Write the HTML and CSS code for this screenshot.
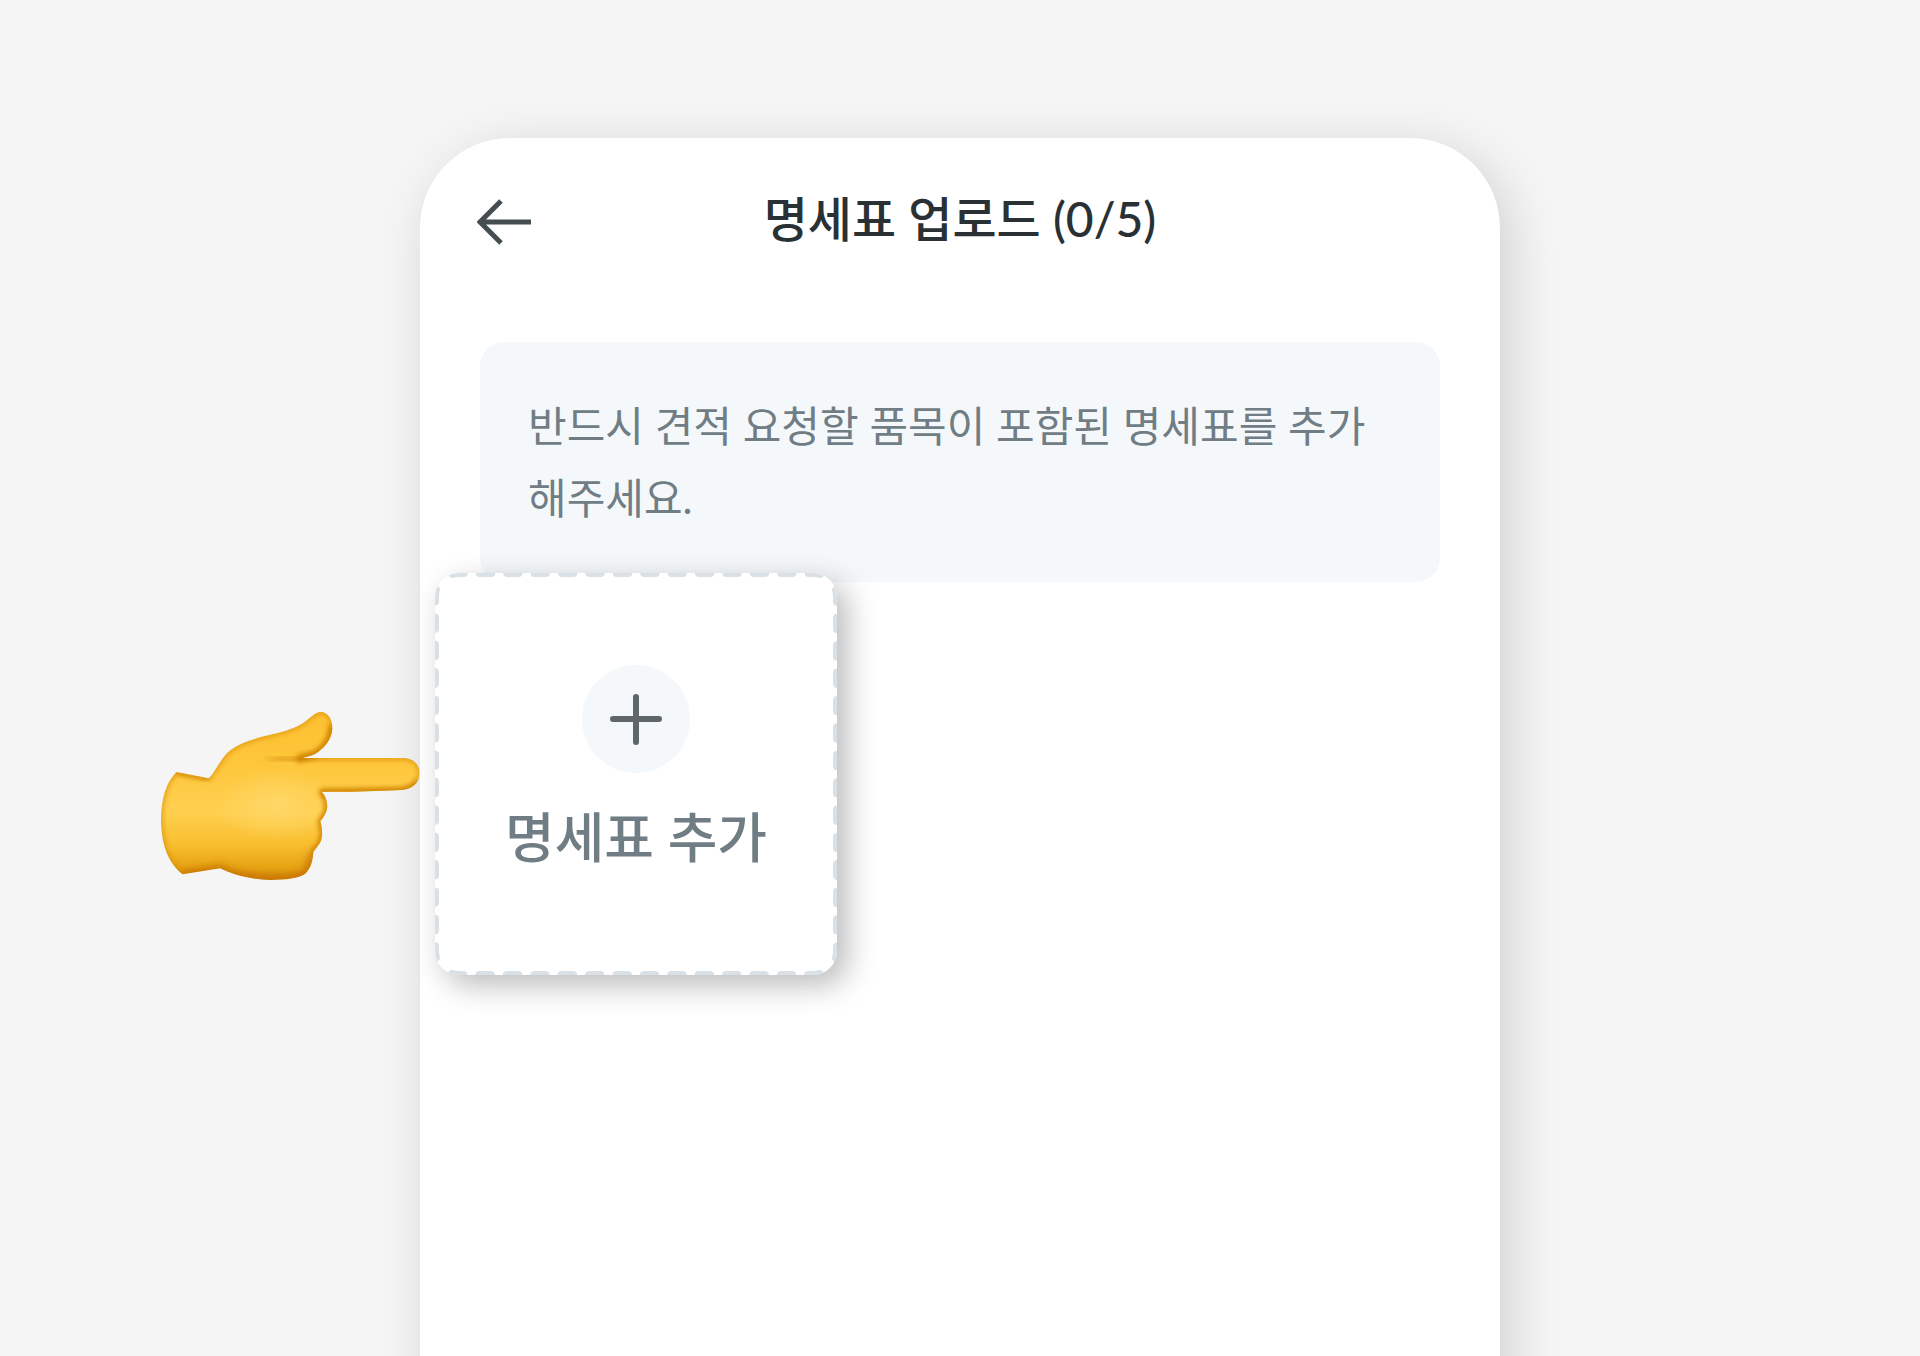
FILE: index.html
```html
<!DOCTYPE html>
<html lang="ko">
<head>
    <meta charset="UTF-8">
    <meta name="viewport" content="width=device-width, initial-scale=1">
    <title>명세표 업로드</title>
    <link rel="stylesheet" href="styles.css">
</head>
<body>
    <div class="stage">
        <div class="guide">
            <svg class="hand" viewBox="60 60 780 510" aria-hidden="true">
                <defs>
                    <path id="hand-shape" d="M109 246L206 265C222 252 236 215 262 188C290 162 330 150 370 139C410 129 445 122 475 107C500 95 515 72 540 65C564 65 577 85 577 115C576 150 550 178 525 192C510 199 495 202 484 204L790 204C822 204 839 225 839 250C839 280 815 298 785 300C700 304 620 306 545 305C558 320 562 335 562 350C560 370 550 382 541 394C548 415 548 440 542 455C535 468 525 478 520 486C519 510 513 535 495 552C475 566 440 569 390 570C330 568 280 555 240 535L128 553C90 525 62 470 63 385C64 320 80 275 109 246Z"/>
                    <clipPath id="hand-clip"><use href="#hand-shape"/></clipPath>
                    <linearGradient id="skin" x1="0" y1="60" x2="0" y2="570" gradientUnits="userSpaceOnUse">
                        <stop offset="0" stop-color="#fcc030"/>
                        <stop offset=".3" stop-color="#fec63a"/>
                        <stop offset=".6" stop-color="#ffd050"/>
                        <stop offset=".8" stop-color="#f8bd2c"/>
                        <stop offset=".93" stop-color="#e5a212"/>
                        <stop offset="1" stop-color="#cf800a"/>
                    </linearGradient>
                    <radialGradient id="glow">
                        <stop offset="0" stop-color="#ffd767"/>
                        <stop offset="1" stop-color="#ffd767" stop-opacity="0"/>
                    </radialGradient>
                    <filter id="soft" x="-20%" y="-50%" width="140%" height="200%"><feGaussianBlur stdDeviation="8"/></filter>
                    <filter id="softer" x="-20%" y="-50%" width="140%" height="200%"><feGaussianBlur stdDeviation="14"/></filter>
                </defs>
                <g clip-path="url(#hand-clip)">
                    <use href="#hand-shape" fill="url(#skin)"/>
                    <ellipse cx="410" cy="345" rx="180" ry="110" fill="url(#glow)"/>
                    <g fill="none" stroke="#d38600">
                        <use href="#hand-shape" stroke-width="10" filter="url(#soft)" opacity=".8"/>
                        <path d="M577 105C576 150 550 180 525 194L470 208" stroke-width="22" filter="url(#soft)"/>
                        <path d="M835 275Q820 300 785 304L545 309" stroke-width="22" filter="url(#soft)"/>
                        <path d="M545 305C575 345 555 380 541 394C560 450 530 470 520 486" stroke-width="12" filter="url(#soft)"/>
                        <path d="M520 486Q515 555 470 570Q340 590 240 540L128 558" stroke="#c46d05" stroke-width="20" filter="url(#softer)"/>
                        <path d="M109 246L206 266" stroke-width="10" filter="url(#soft)"/>
                    </g>
                    <path d="M365 207Q430 202 500 204L484 210Q430 212 365 207Z" fill="#c97b05" filter="url(#soft)"/>
                </g>
            </svg>
        </div>

        <main class="phone">
            <header class="topbar">
                <button class="back" type="button" aria-label="뒤로">
                    <svg viewBox="0 0 54 54">
                        <path d="M54 30H4M24 9L3 30L24 51"/>
                    </svg>
                </button>
                <h1>명세표 업로드 (0/5)</h1>
            </header>

            <p class="notice">반드시 견적 요청할 품목이 포함된 명세표를 추가해주세요.</p>

            <button class="add-card" type="button">
                <svg class="dashes" viewBox="0 0 402 402" aria-hidden="true">
                    <path id="side" d="M7 7A24 24 0 0 1 24 0H378A24 24 0 0 1 395 7"/>
                    <use href="#side" transform="rotate(90 201 201)"/>
                    <use href="#side" transform="rotate(180 201 201)"/>
                    <use href="#side" transform="rotate(270 201 201)"/>
                </svg>
                <span class="plus">
                    <svg viewBox="0 0 108 108">
                        <path d="M54 32V77M31 54H77"/>
                    </svg>
                </span>
                <span class="add-label">명세표 추가</span>
            </button>
        </main>
    </div>
</body>
</html>
```

FILE: styles.css
```css
* {
    box-sizing: border-box;
}
body {
    margin: 0;
    background: #f5f5f5;
    font-family: Lato, 'Noto Sans CJK KR', sans-serif;
}
button {
    padding: 0;
    border: 0;
    background: none;
    font-family: inherit;
    cursor: pointer;
}
svg {
    display: block;
}
.stage {
    display: grid;
    grid-template-columns: 7fr 18fr 7fr;
    min-height: 100vh;
    padding-top: 138px;
    overflow: hidden;
}
.guide {
    display: flex;
    justify-content: flex-end;
    align-items: flex-start;
    padding-top: 572px;
}
.hand {
    width: 260px;
    height: 170px;
    position: relative;
    z-index: 1;
}
/* runs past the bottom of the window */
.phone {
    margin-bottom: -120px;
    padding: 0 60px;
    background: #fff;
    border-radius: 90px 90px 0 0;
    box-shadow: 10px 12px 52px rgba(0, 0, 0, 0.15);
}
.topbar {
    display: grid;
    grid-template-columns: 54px 1fr 54px;
    align-items: center;
    height: 162px;
    margin: 0 -3px 42px;
}
.back svg {
    width: 54px;
    height: 54px;
    fill: none;
    stroke: #444d50;
    stroke-width: 5;
}
h1 {
    margin: 0;
    font-size: 48px;
    font-weight: 500;
    line-height: 72px;
    text-align: center;
    color: #2a3135;
}
.notice {
    margin: 0;
    padding: 48px;
    border-radius: 24px;
    background: #f4f8fb;
    color: #707d85;
    font-size: 42px;
    line-height: 72px;
}
.add-card {
    display: flex;
    flex-direction: column;
    align-items: center;
    justify-content: center;
    gap: 20px;
    position: relative;
    width: 402px;
    height: 402px;
    margin: -9px 0 0 -45px;
    border-radius: 24px;
    background: #fff;
    box-shadow: 10px 10px 30px rgba(0, 0, 0, 0.27);
}
.dashes {
    position: absolute;
    inset: 0;
    border-radius: 24px;
    overflow: hidden;
    fill: none;
    stroke: #d9e1e7;
    stroke-width: 8;
    stroke-linecap: round;
    stroke-dasharray: 11.4 16;
    stroke-dashoffset: -12.1;
}
.plus {
    width: 108px;
    height: 108px;
    border-radius: 50%;
    background: #f4f8fb;
}
.plus svg {
    fill: none;
    stroke: #5f666a;
    stroke-width: 6;
    stroke-linecap: round;
}
.add-label {
    font-size: 54px;
    font-weight: 500;
    line-height: 90px;
    color: #707d85;
}
```
